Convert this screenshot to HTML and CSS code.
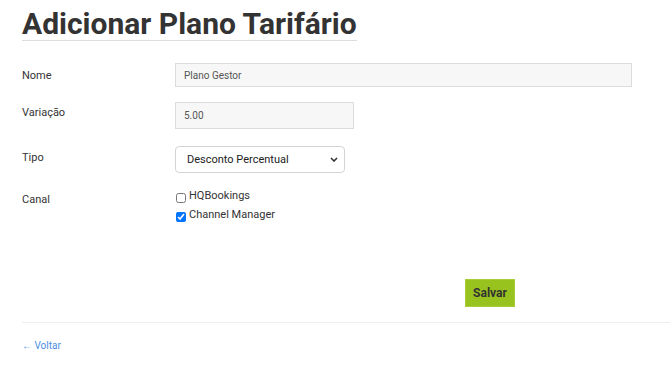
FILE: index.html
```html
<!DOCTYPE html>
<html lang="pt">
<head>
    <meta charset="UTF-8">
    <title>Adicionar Plano Tarifário</title>
    <link rel="stylesheet" href="styles.css">
</head>
<body>
    <div class="page">
        <h1 class="page-title">Adicionar Plano Tarifário</h1>

        <form class="plan-form">
            <div class="form-row row-nome">
                <label for="nome">Nome</label>
                <input type="text" id="nome" class="field field-wide" value="Plano Gestor">
            </div>

            <div class="form-row row-variacao">
                <label for="variacao">Variação</label>
                <input type="text" id="variacao" class="field field-short" value="5.00">
            </div>

            <div class="form-row row-tipo">
                <label for="tipo">Tipo</label>
                <div class="select-wrap">
                    <select id="tipo" class="select">
                        <option>Desconto Percentual</option>
                        <option>Desconto Fixo</option>
                    </select>
                    <svg class="select-arrow" width="8" height="5" viewBox="0 0 8 5">
                        <path d="M1 1 L4 4 L7 1" fill="none" stroke="#333" stroke-width="1.6"/>
                    </svg>
                </div>
            </div>

            <div class="form-row row-canal">
                <label>Canal</label>
                <div class="checks">
                    <label class="check"><input type="checkbox"> HQBookings</label>
                    <label class="check"><input type="checkbox" checked> Channel Manager</label>
                </div>
            </div>

            <div class="form-actions">
                <button type="button" class="btn-save">Salvar</button>
            </div>
        </form>

        <hr class="divider">

        <a href="#" class="back-link">&larr; Voltar</a>
    </div>
</body>
</html>
```

FILE: styles.css
```css
body {
    margin: 0;
    font-family: Roboto, "Liberation Sans", Arial, sans-serif;
    color: #333;
    background-color: #fff;
}

.page {
    padding: 0 0 0 22px;
}

.page-title {
    display: inline-block;
    margin: 0;
    padding-top: 7px;
    padding-bottom: 0;
    font-size: 30px;
    font-weight: 700;
    color: #333;
    border-bottom: 1px solid #ddd;
    line-height: 33px;
}

.plan-form {
    margin-top: 22px;
}

.form-row {
    display: flex;
    align-items: flex-start;
}

.form-row > label {
    width: 153px;
    flex-shrink: 0;
    font-size: 11px;
    line-height: 15px;
    color: #333;
}

.row-nome > label {
    padding-top: 5px;
}

.row-variacao {
    margin-top: 15px;
}

.row-variacao > label {
    padding-top: 3px;
}

.row-tipo {
    margin-top: 17px;
}

.row-tipo > label {
    padding-top: 4px;
}

.row-canal {
    margin-top: 15px;
}

.row-canal > label {
    padding-top: 4px;
}

.field {
    box-sizing: border-box;
    margin: 0;
    padding: 0 8px;
    border: 1px solid #dcdcdc;
    background-color: #f7f7f7;
    font-family: inherit;
    font-size: 10px;
    color: #555;
    outline: none;
}

.field-wide {
    width: 457px;
    height: 24px;
}

.field-short {
    width: 179px;
    height: 27px;
}

.select-wrap {
    position: relative;
    width: 170px;
    height: 27px;
}

.select {
    box-sizing: border-box;
    width: 170px;
    height: 27px;
    margin: 0;
    padding: 0 11px;
    border: 1px solid #d4d4d4;
    border-radius: 4px;
    background-color: #fff;
    font-family: inherit;
    font-size: 11px;
    color: #222;
    appearance: none;
    -webkit-appearance: none;
}

.select-arrow {
    position: absolute;
    right: 7px;
    top: 11px;
    pointer-events: none;
}

.checks {
    display: flex;
    flex-direction: column;
    gap: 3px;
}

.check {
    display: flex;
    align-items: center;
    font-size: 11px;
    line-height: 16px;
    color: #333;
}

.check input {
    width: 10px;
    height: 10px;
    margin: 3px 3px 0 1px;
}

.form-actions {
    margin-top: 56px;
    padding-left: 443px;
}

.btn-save {
    width: 50px;
    height: 28px;
    padding: 0;
    border: 1px solid #a8cf3a;
    background-color: #98c21d;
    font-family: inherit;
    font-size: 12px;
    font-weight: 700;
    color: #333;
    cursor: pointer;
}

.divider {
    margin: 15px 0 0 0;
    border: 0;
    border-top: 1px solid #eee;
}

.back-link {
    display: inline-block;
    margin-top: 17px;
    font-size: 10px;
    color: #4a90e2;
    text-decoration: none;
}
```
